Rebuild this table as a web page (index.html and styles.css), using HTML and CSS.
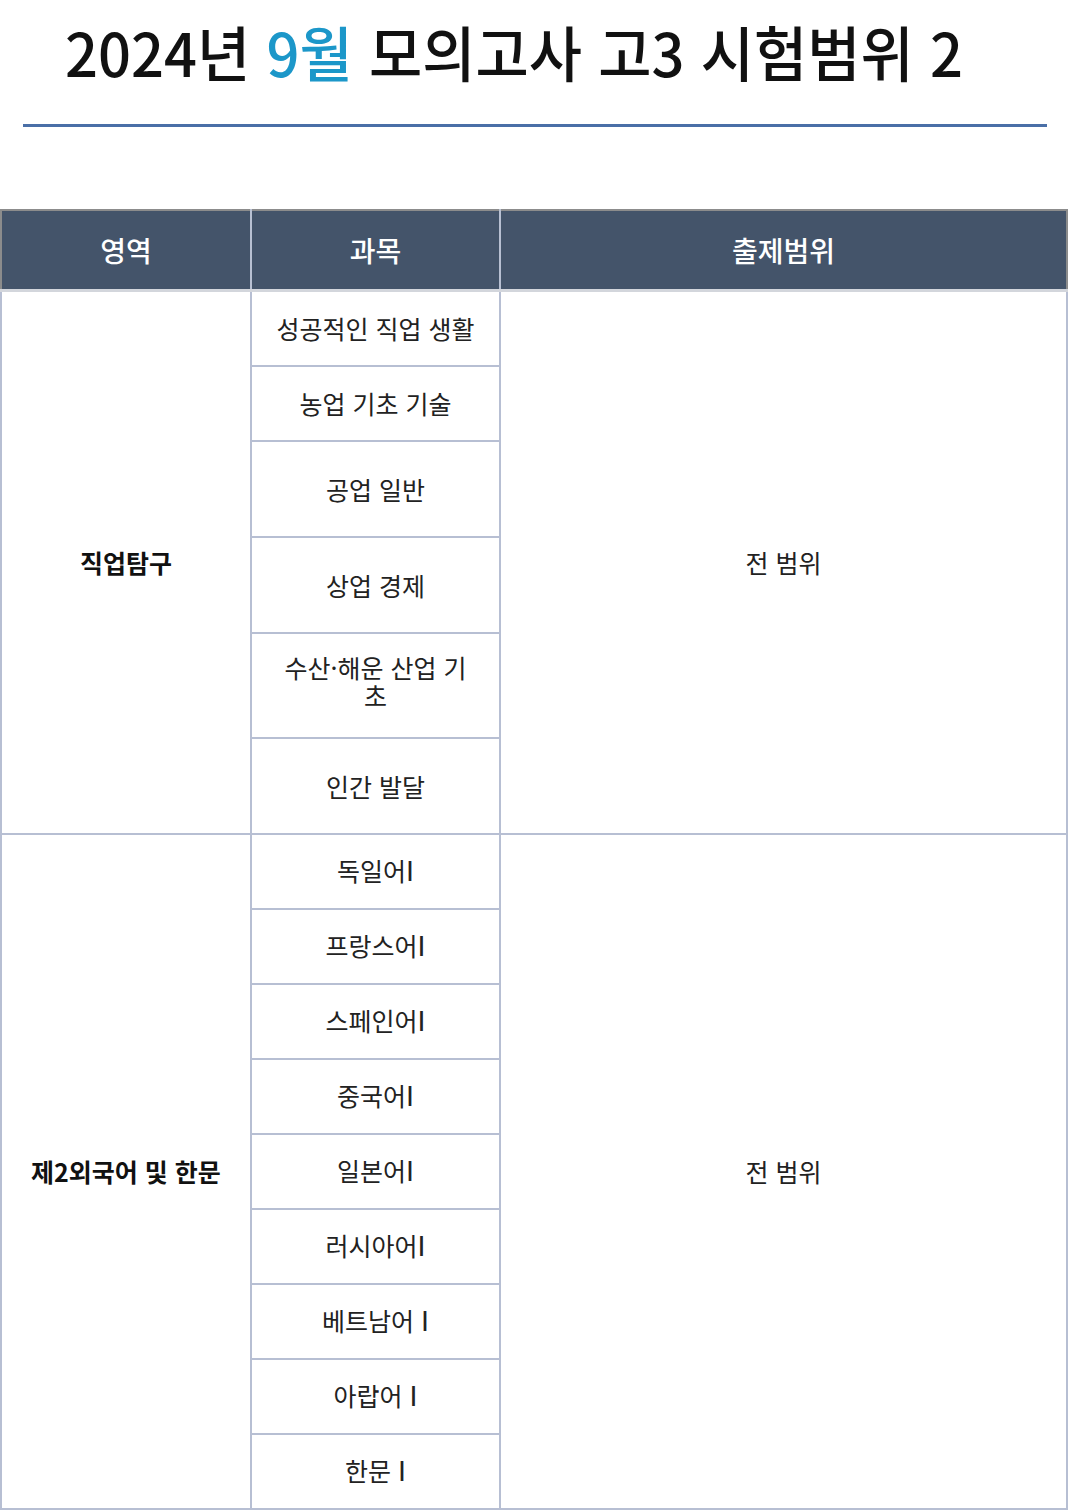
FILE: index.html
```html
<!DOCTYPE html>
<html lang="ko">
<head>
<meta charset="utf-8">
<link rel="stylesheet" href="styles.css">
</head>
<body>
<header class="page-head">
  <h1 class="title"><span class="title-text">2024년 <span class="accent">9월</span> 모의고사 고3 시험범위 2</span></h1>
  <div class="rule"></div>
</header>
<table class="range">
  <thead>
    <tr>
      <th class="c1">영역</th>
      <th class="c2">과목</th>
      <th class="c3">출제범위</th>
    </tr>
  </thead>
  <tbody>
    <tr class="r75">
      <td class="area" rowspan="6">직업탐구</td>
      <td class="subj">성공적인 직업 생활</td>
      <td class="scope" rowspan="6">전 범위</td>
    </tr>
    <tr class="r75"><td class="subj">농업 기초 기술</td></tr>
    <tr class="r96"><td class="subj">공업 일반</td></tr>
    <tr class="r96"><td class="subj subj-low">상업 경제</td></tr>
    <tr class="r105"><td class="subj subj-top">수산·해운 산업 기초</td></tr>
    <tr class="r96"><td class="subj">인간 발달</td></tr>
    <tr class="r75">
      <td class="area" rowspan="9">제2외국어 및 한문</td>
      <td class="subj">독일어<span class="rn">Ⅰ</span></td>
      <td class="scope" rowspan="9">전 범위</td>
    </tr>
    <tr class="r75"><td class="subj">프랑스어<span class="rn">Ⅰ</span></td></tr>
    <tr class="r75"><td class="subj">스페인어<span class="rn">Ⅰ</span></td></tr>
    <tr class="r75"><td class="subj">중국어<span class="rn">Ⅰ</span></td></tr>
    <tr class="r75"><td class="subj">일본어<span class="rn">Ⅰ</span></td></tr>
    <tr class="r75"><td class="subj">러시아어<span class="rn">Ⅰ</span></td></tr>
    <tr class="r75"><td class="subj">베트남어 <span class="rn">Ⅰ</span></td></tr>
    <tr class="r75"><td class="subj">아랍어 <span class="rn">Ⅰ</span></td></tr>
    <tr class="r75"><td class="subj">한문 <span class="rn">Ⅰ</span></td></tr>
  </tbody>
</table>
</body>
</html>
```

FILE: styles.css
```css
html, body {
  margin: 0;
  padding: 0;
  background: #ffffff;
}
body {
  width: 1072px;
  font-family: "Noto Sans CJK KR", "Noto Sans", sans-serif;
  color: #222222;
}
.page-head {
  padding-top: 11px;
}
.title {
  margin: 0;
  padding-left: 65px;
  height: 80px;
  font-size: 60px;
  font-weight: 500;
  line-height: 80px;
  color: #111111;
  white-space: nowrap;
}
.title-text {
  display: inline-block;
  transform: scaleX(0.965);
  transform-origin: left center;
}
.accent {
  color: #1c97c9;
}
.rule {
  margin: 33px 0 0 23px;
  width: 1024px;
  height: 3px;
  background: #4a6fa7;
}
.range {
  margin-top: 82px;
  width: 1068px;
  border-collapse: collapse;
  table-layout: fixed;
  border: 2px solid #8c8c8c;
}
.c1 { width: 248px; }
.c2 { width: 247px; }
.range th {
  height: 78px;
  background: #44546a;
  color: #ffffff;
  font-size: 28px;
  font-weight: 500;
  text-align: center;
  border-left: 2px solid #b8c0d2;
  border-bottom: 3px solid #d3d6dc;
  padding: 0;
}
.range th:first-child { border-left: none; }
.range td {
  border: 2px solid #b7bfd3;
  text-align: center;
  vertical-align: middle;
  padding: 0 10px;
  font-size: 25px;
  line-height: 28px;
}
.area {
  font-weight: 700;
  color: #111111;
  font-size: 24.5px;
}
.subj {
  color: #222222;
}
.rn {
  font-family: "DejaVu Sans", "Liberation Sans", sans-serif;
  font-size: 27px;
}
.subj-low { padding-top: 0 !important; }
.subj-top { padding: 0 24px 8px !important; }
.scope {
  color: #222222;
}
.r75 { height: 75px; }
.r96 { height: 96px; }
.r105 { height: 105px; }
```
